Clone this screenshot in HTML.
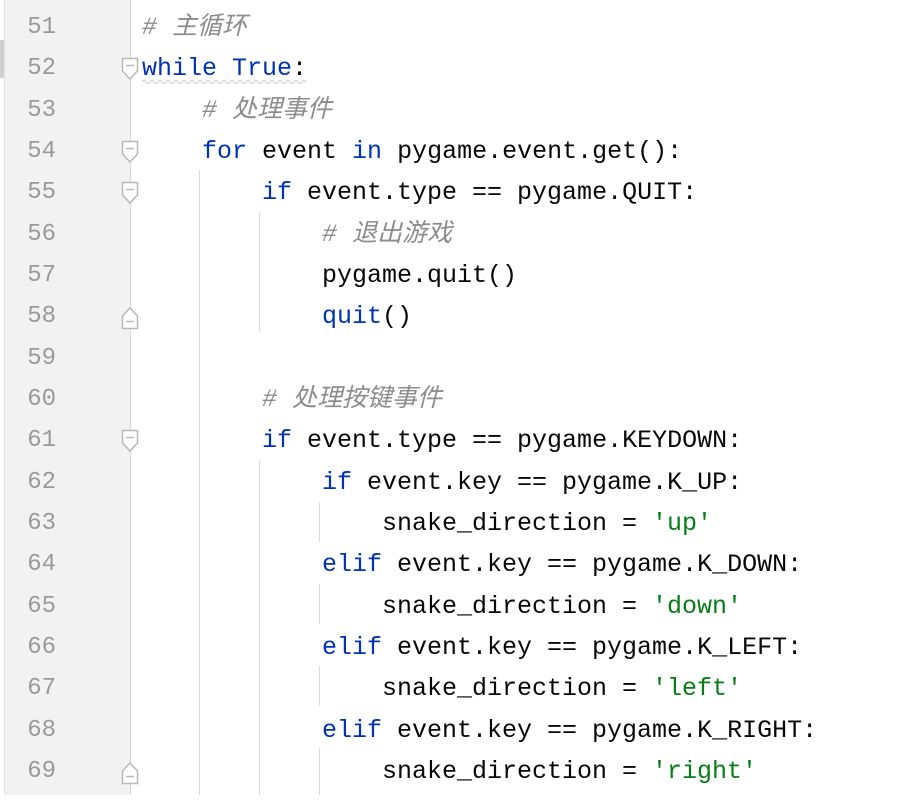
<!DOCTYPE html>
<html><head><meta charset="utf-8"><style>
body{margin:0;width:919px;height:802px;background:#fff;position:relative;overflow:hidden}
.g{position:absolute;left:4px;top:0;width:125px;height:795px;background:#f2f2f2;border-left:1px solid #e4e4e4;border-right:1px solid #d8d8d8}
.mk{position:absolute;left:0;top:40px;width:4px;height:38px;background:#cfcfcf}
.w{position:absolute;left:0;top:2px;width:919px;height:800px}
.n{position:absolute;left:0;width:56px;text-align:right;font:24px "Liberation Mono",monospace;color:#9a9a9a;height:41px;line-height:41px}
.l{position:absolute;font:25px "Liberation Mono","Noto Sans CJK SC",monospace;color:#080808;white-space:pre;height:41px;line-height:41px}
.k{color:#0033b3}.c{color:#8c8c8c;font-style:italic}.s{color:#067d17}
.v{position:absolute;width:1px;background:#dadada}
.f{position:absolute;left:121px}
</style></head><body>
<div class="g"></div><div class="mk"></div>
<div class="v" style="left:199px;top:170px;height:625px"></div>
<div class="v" style="left:259px;top:212px;height:120px"></div>
<div class="v" style="left:259px;top:460px;height:335px"></div>
<div class="v" style="left:319px;top:502px;height:40px"></div>
<div class="v" style="left:319px;top:584px;height:40px"></div>
<div class="v" style="left:319px;top:666px;height:40px"></div>
<div class="v" style="left:319px;top:748px;height:47px"></div>
<div class="w">
<div class="n" style="top:5px">51</div><div class="n" style="top:46px">52</div><div class="n" style="top:88px">53</div><div class="n" style="top:129px">54</div><div class="n" style="top:170px">55</div><div class="n" style="top:212px">56</div><div class="n" style="top:253px">57</div><div class="n" style="top:294px">58</div><div class="n" style="top:336px">59</div><div class="n" style="top:377px">60</div><div class="n" style="top:418px">61</div><div class="n" style="top:460px">62</div><div class="n" style="top:501px">63</div><div class="n" style="top:542px">64</div><div class="n" style="top:584px">65</div><div class="n" style="top:625px">66</div><div class="n" style="top:666px">67</div><div class="n" style="top:708px">68</div><div class="n" style="top:749px">69</div>

<svg class="f" style="top:55px" width="18" height="26"><path d="M1.5 1.5H16.5V14L9 22L1.5 14Z" fill="#fff" stroke="#b8b8b8" stroke-width="1.5"/><path d="M5 8.5H13" stroke="#b8b8b8" stroke-width="1.5"/></svg>
<svg class="f" style="top:138px" width="18" height="26"><path d="M1.5 1.5H16.5V14L9 22L1.5 14Z" fill="#fff" stroke="#b8b8b8" stroke-width="1.5"/><path d="M5 8.5H13" stroke="#b8b8b8" stroke-width="1.5"/></svg>
<svg class="f" style="top:179px" width="18" height="26"><path d="M1.5 1.5H16.5V14L9 22L1.5 14Z" fill="#fff" stroke="#b8b8b8" stroke-width="1.5"/><path d="M5 8.5H13" stroke="#b8b8b8" stroke-width="1.5"/></svg>
<svg class="f" style="top:427px" width="18" height="26"><path d="M1.5 1.5H16.5V14L9 22L1.5 14Z" fill="#fff" stroke="#b8b8b8" stroke-width="1.5"/><path d="M5 8.5H13" stroke="#b8b8b8" stroke-width="1.5"/></svg>
<svg class="f" style="top:302px" width="18" height="26"><path d="M1.5 24.5H16.5V12L9 4L1.5 12Z" fill="#fff" stroke="#b8b8b8" stroke-width="1.5"/><path d="M5 17.5H13" stroke="#b8b8b8" stroke-width="1.5"/></svg>
<svg class="f" style="top:757px" width="18" height="26"><path d="M1.5 24.5H16.5V12L9 4L1.5 12Z" fill="#fff" stroke="#b8b8b8" stroke-width="1.5"/><path d="M5 17.5H13" stroke="#b8b8b8" stroke-width="1.5"/></svg>

<svg style="position:absolute;left:142px;top:77px" width="166" height="6"><path d="M0 3 q2-3 4 0 t4 0 t4 0 t4 0 t4 0 t4 0 t4 0 t4 0 t4 0 t4 0 t4 0 t4 0 t4 0 t4 0 t4 0 t4 0 t4 0 t4 0 t4 0 t4 0 t4 0 t4 0 t4 0 t4 0 t4 0 t4 0 t4 0 t4 0 t4 0 t4 0 t4 0 t4 0 t4 0 t4 0 t4 0 t4 0 t4 0 t4 0 t4 0 t4 0 t4 0" fill="none" stroke="#c8c8c8" stroke-width="1"/></svg>

<div class="l c" style="left:142px;top:5px"># 主循环</div>
<div class="l" style="left:142px;top:46px"><span class="k">while True</span>:</div>
<div class="l c" style="left:202px;top:88px"># 处理事件</div>
<div class="l" style="left:202px;top:129px"><span class="k">for</span> event <span class="k">in</span> pygame.event.get():</div>
<div class="l" style="left:262px;top:170px"><span class="k">if</span> event.type == pygame.QUIT:</div>
<div class="l c" style="left:322px;top:212px"># 退出游戏</div>
<div class="l" style="left:322px;top:253px">pygame.quit()</div>
<div class="l" style="left:322px;top:294px"><span class="k">quit</span>()</div>
<div class="l c" style="left:262px;top:377px"># 处理按键事件</div>
<div class="l" style="left:262px;top:418px"><span class="k">if</span> event.type == pygame.KEYDOWN:</div>
<div class="l" style="left:322px;top:460px"><span class="k">if</span> event.key == pygame.K_UP:</div>
<div class="l" style="left:382px;top:501px">snake_direction = <span class="s">'up'</span></div>
<div class="l" style="left:322px;top:542px"><span class="k">elif</span> event.key == pygame.K_DOWN:</div>
<div class="l" style="left:382px;top:584px">snake_direction = <span class="s">'down'</span></div>
<div class="l" style="left:322px;top:625px"><span class="k">elif</span> event.key == pygame.K_LEFT:</div>
<div class="l" style="left:382px;top:666px">snake_direction = <span class="s">'left'</span></div>
<div class="l" style="left:322px;top:708px"><span class="k">elif</span> event.key == pygame.K_RIGHT:</div>
<div class="l" style="left:382px;top:749px">snake_direction = <span class="s">'right'</span></div>
</div>
</body></html>
